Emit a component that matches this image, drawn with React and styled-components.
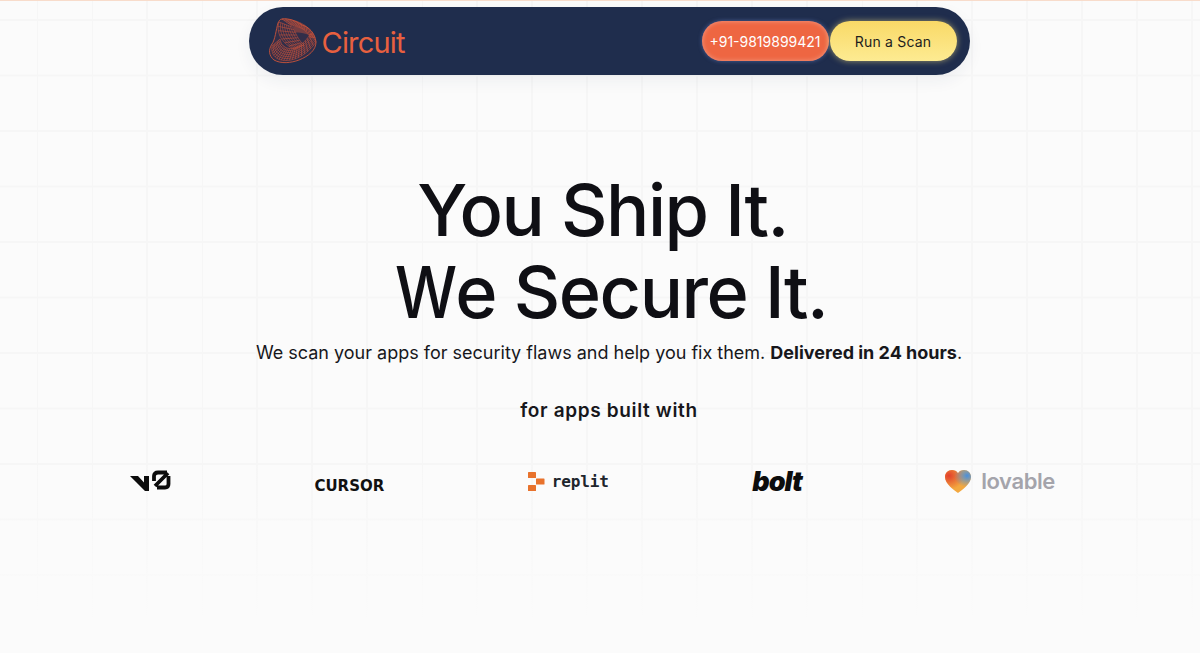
import React from 'react'
import styled, { createGlobalStyle } from 'styled-components'

const GlobalStyle = createGlobalStyle`
  html, body {
    margin: 0;
    padding: 0;
    height: 100%;
    overflow: hidden;
  }
  body {
    background-color: #fbfbfb;
    font-family: Inter, "Liberation Sans", sans-serif;
    color: #111116;
  }
`

const Page = styled.div`
  height: 653px;
  box-sizing: border-box;
  border-top: 1px solid #f8dccb;
  padding: 6px 0 0 18px;
  display: flex;
  flex-direction: column;
  align-items: center;
  background-color: #fbfbfb;
  background-image:
    linear-gradient(to bottom, rgba(251, 251, 251, 0) 70%, #fbfbfb 95%),
    linear-gradient(to right, #f6f6f6 2px, transparent 2px),
    linear-gradient(to bottom, #f6f6f6 2px, transparent 2px);
  background-size: 100% 100%, 55px 55.5px, 55px 55.5px;
  background-position: 0 0, 36px 18px, 36px 18px;
`

const Nav = styled.header`
  width: 721px;
  height: 68px;
  box-sizing: border-box;
  padding: 0 13px 0 20px;
  border-radius: 34px;
  background: #1f2d4d;
  box-shadow: 0 6px 16px rgba(31, 45, 77, 0.06);
  display: flex;
  align-items: center;
  justify-content: space-between;
`

const Brand = styled.div`
  display: flex;
  align-items: center;
  gap: 5px;
`

const BrandName = styled.span`
  font-size: 29px;
  font-weight: 400;
  letter-spacing: -0.8px;
  color: #e8603f;
  padding-top: 2px;
`

const NavActions = styled.div`
  display: flex;
  align-items: center;
  gap: 1px;
`

const PhoneButton = styled.button`
  height: 40px;
  width: 127px;
  padding: 0;
  border: none;
  border-radius: 20px;
  background: #ee6642;
  box-shadow: inset 0 0 5px rgba(255, 255, 255, 0.35), 0 0 4px rgba(120, 150, 230, 0.5);
  color: #fff;
  font-family: Inter, sans-serif;
  font-size: 14px;
`

const ScanButton = styled.button`
  height: 40px;
  width: 127px;
  padding: 0;
  border: none;
  border-radius: 20px;
  background: linear-gradient(to bottom, #f9d967, #fdeb92);
  box-shadow: 0 0 6px rgba(253, 230, 130, 0.55);
  color: #1d1d1d;
  font-family: Inter, sans-serif;
  font-size: 14px;
  letter-spacing: 0.2px;
`

const Hero = styled.main`
  display: flex;
  flex-direction: column;
  align-items: center;
  padding-top: 94px;
`

const Title = styled.h1`
  margin: 0;
  font-size: 72px;
  line-height: 82px;
  font-weight: 550;
  letter-spacing: -1.5px;
  text-align: center;
  color: #0f0f14;
`

const TitleLine = styled.span`
  display: block;
  padding-left: ${p => p.$left || 0}px;
  padding-right: ${p => p.$right || 0}px;
`

// the W of the reference face is much narrower than the Inter one
const NarrowW = styled.span`
  display: inline-block;
  transform: scaleX(0.86);
  transform-origin: left center;
  margin-right: -10px;
`

const Subtitle = styled.p`
  margin: 6px 0 0;
  font-size: 18px;
  line-height: 28px;
  color: #17171b;

  strong {
    font-weight: 700;
  }
`

const BuiltWith = styled.h2`
  margin: 30px 0 0;
  font-size: 19px;
  line-height: 28px;
  font-weight: 600;
  letter-spacing: 0.65px;
  color: #17171b;
`

const LogoRow = styled.div`
  width: 925px;
  margin: 40px 33px 0 0;
  display: flex;
  justify-content: space-between;
  align-items: center;
  height: 32px;
`

const LogoCell = styled.div`
  display: flex;
  align-items: center;
  gap: ${p => p.$gap || 0}px;
`

const CursorMark = styled.span`
  font-family: "DejaVu Sans", sans-serif;
  font-weight: 700;
  font-size: 15px;
  color: #111;
  padding-top: 9px;
`

const ReplitMark = styled.span`
  font-family: "DejaVu Sans Mono", monospace;
  font-weight: 700;
  font-size: 16px;
  letter-spacing: -0.1px;
  color: #20252c;
`

const BoltMark = styled.span`
  font-family: Inter, sans-serif;
  font-weight: 900;
  font-style: italic;
  font-size: 27px;
  letter-spacing: -1px;
  color: #0d0d0d;
`

const LovableMark = styled.span`
  font-family: Inter, sans-serif;
  font-weight: 600;
  font-size: 22px;
  letter-spacing: -0.4px;
  color: #a4a4ab;
`

const bez = (r, t) => {
  const s = 1 - t
  const c = i => s * s * s * r[0][i] + 3 * s * s * t * r[1][i] + 3 * s * t * t * r[2][i] + t * t * t * r[3][i]
  return [c(0), c(1)]
}

// wire mesh stretched between two bezier rails
function Mesh({ a, b, nu, nv }) {
  const lines = []
  for (let i = 0; i <= nu; i++) {
    const p = bez(a, i / nu)
    const q = bez(b, i / nu)
    lines.push(<line key={`u${i}`} x1={p[0]} y1={p[1]} x2={q[0]} y2={q[1]} />)
  }
  for (let j = 0; j <= nv; j++) {
    const pts = []
    for (let i = 0; i <= 24; i++) {
      const p = bez(a, i / 24)
      const q = bez(b, i / 24)
      const k = j / nv
      pts.push(`${p[0] + (q[0] - p[0]) * k},${p[1] + (q[1] - p[1]) * k}`)
    }
    lines.push(<polyline key={`v${j}`} points={pts.join(' ')} />)
  }
  return <g>{lines}</g>
}

function KnotLogo() {
  return (
    <svg width="48" height="46" viewBox="0 0 48 46" fill="none" stroke="#c9533a" strokeWidth="0.55">
      <path d="M13 1C20 0 27 3 33 7C40 9 46 15 47 24C47 32 40 38 30 42C22 45 12 46 5 42C0 38 -1 32 3 26C6 22 7 12 9 5C10 3 11 1 13 1Z" fill="#3a2f47" fillOpacity="0.7" strokeWidth="0.9" />
      <Mesh a={[[3, 28], [0, 47], [30, 49], [47, 24]]} b={[[11, 21], [13, 34], [30, 35], [42, 15]]} nu={20} nv={6} />
      <Mesh a={[[10, 4], [7, 14], [12, 25], [25, 31]]} b={[[23, 9], [27, 15], [29, 22], [35, 27]]} nu={7} nv={7} />
      <Mesh a={[[13, 1], [24, 1], [40, 5], [46, 20]]} b={[[23, 8], [30, 8], [38, 12], [41, 19]]} nu={10} nv={5} />
      <path d="M24 9C30 7 37 11 40 17C35 15 29 14 26 15Z" fill="#c9533a" fillOpacity="0.45" stroke="none" />
    </svg>
  )
}

function V0Logo() {
  return (
    <svg width="41" height="22" viewBox="0 0 41 22" fill="#0d0d0d">
      <path d="M0 6H8L14 12.5V6H19V21H15Z" />
      <path d="M24 11V6Q24 2.5 28 2.5H37M38.5 6V14Q38.5 17.5 35 17.5H27M38 3L25 16" fill="none" stroke="#0d0d0d" strokeWidth="3.8" />
    </svg>
  )
}

function ReplitIcon() {
  return (
    <svg width="17" height="19" viewBox="0 0 17 19" fill="#e8722c">
      <rect x="0" y="0" width="8" height="6" rx="0.6" />
      <rect x="8" y="6.5" width="8.5" height="6" rx="0.6" />
      <rect x="0" y="13" width="8" height="6" rx="0.6" />
    </svg>
  )
}

const HEART = 'M13 23C9 20 0 14 0 7C0 3 3 0 7 0C9.5 0 11.7 1.2 13 3.2C14.3 1.2 16.5 0 19 0C23 0 26 3 26 7C26 14 17 20 13 23Z'

function HeartIcon() {
  return (
    <svg width="26" height="23" viewBox="0 0 26 23">
      <defs>
        <radialGradient id="heartRed" cx="0.15" cy="0.25" r="0.6">
          <stop offset="0" stopColor="#e2402c" />
          <stop offset="1" stopColor="#e2402c" stopOpacity="0" />
        </radialGradient>
        <radialGradient id="heartBlue" cx="0.85" cy="0.25" r="0.5">
          <stop offset="0" stopColor="#4a90dc" />
          <stop offset="1" stopColor="#4a90dc" stopOpacity="0" />
        </radialGradient>
      </defs>
      <path d={HEART} fill="#f3a83f" />
      <path d={HEART} fill="url(#heartRed)" />
      <path d={HEART} fill="url(#heartBlue)" />
    </svg>
  )
}

export default function App() {
  return (
    <>
      <GlobalStyle />
      <Page>
        <Nav>
          <Brand>
            <KnotLogo />
            <BrandName>Circuit</BrandName>
          </Brand>
          <NavActions>
            <PhoneButton>+91-9819899421</PhoneButton>
            <ScanButton>Run a Scan</ScanButton>
          </NavActions>
        </Nav>
        <Hero>
          <Title>
            <TitleLine $right={13}>You Ship It.</TitleLine>
            <TitleLine $left={4}><NarrowW>W</NarrowW>e Secure It.</TitleLine>
          </Title>
          <Subtitle>We scan your apps for security flaws and help you fix them. <strong>Delivered in 24 hours</strong>.</Subtitle>
          <BuiltWith>for apps built with</BuiltWith>
          <LogoRow>
            <LogoCell><V0Logo /></LogoCell>
            <LogoCell><CursorMark>CURSOR</CursorMark></LogoCell>
            <LogoCell $gap={7}><ReplitIcon /><ReplitMark>replit</ReplitMark></LogoCell>
            <LogoCell><BoltMark>bolt</BoltMark></LogoCell>
            <LogoCell $gap={10}><HeartIcon /><LovableMark>lovable</LovableMark></LogoCell>
          </LogoRow>
        </Hero>
      </Page>
    </>
  )
}
